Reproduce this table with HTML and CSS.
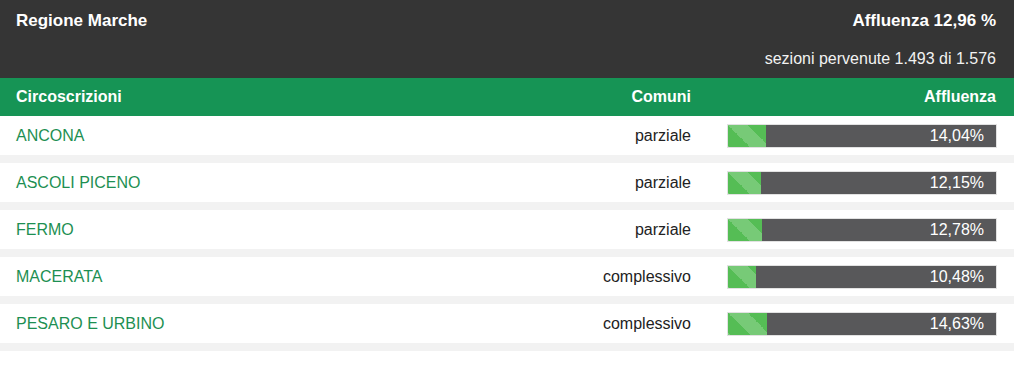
FILE: index.html
```html
<!DOCTYPE html>
<html lang="it">
<head>
<meta charset="utf-8">
<link rel="stylesheet" href="styles.css">
</head>
<body>
<div class="panel">
  <div class="top">
    <div class="top-row">
      <span class="region">Regione Marche</span>
      <span class="total">Affluenza 12,96 %</span>
    </div>
    <div class="sections">sezioni pervenute 1.493 di 1.576</div>
  </div>
  <div class="grid head">
    <span>Circoscrizioni</span>
    <span class="right">Comuni</span>
    <span class="right">Affluenza</span>
  </div>
  <div class="grid row">
    <span class="name">ANCONA</span>
    <span class="right">parziale</span>
    <div class="bar"><div class="fill" style="width:14.04%"></div><span class="pct">14,04%</span></div>
  </div>
  <div class="grid row">
    <span class="name">ASCOLI PICENO</span>
    <span class="right">parziale</span>
    <div class="bar"><div class="fill" style="width:12.15%"></div><span class="pct">12,15%</span></div>
  </div>
  <div class="grid row">
    <span class="name">FERMO</span>
    <span class="right">parziale</span>
    <div class="bar"><div class="fill" style="width:12.78%"></div><span class="pct">12,78%</span></div>
  </div>
  <div class="grid row">
    <span class="name">MACERATA</span>
    <span class="right">complessivo</span>
    <div class="bar"><div class="fill" style="width:10.48%"></div><span class="pct">10,48%</span></div>
  </div>
  <div class="grid row">
    <span class="name">PESARO E URBINO</span>
    <span class="right">complessivo</span>
    <div class="bar"><div class="fill" style="width:14.63%"></div><span class="pct">14,63%</span></div>
  </div>
</div>
</body>
</html>
```
FILE: styles.css
```css
html, body {
  margin: 0;
  padding: 0;
  background: #ffffff;
}
body {
  font-family: "Liberation Sans", Arial, sans-serif;
  color: #222222;
}
.panel {
  width: 1014px;
}
.top {
  background: #353535;
  color: #ffffff;
  height: 78px;
  box-sizing: border-box;
  padding: 10px 18px 0 16px;
}
.top-row {
  display: flex;
  justify-content: space-between;
  font-weight: bold;
  font-size: 17px;
  line-height: 21px;
}
.sections {
  text-align: right;
  font-size: 16px;
  line-height: 18px;
  margin-top: 19px;
  color: #f2f2f2;
}
.grid {
  display: grid;
  grid-template-columns: 1fr 200px 268px;
  column-gap: 37px;
  align-items: center;
  padding: 0 18px 0 16px;
}
.right {
  text-align: right;
}
.head {
  background: #169455;
  color: #ffffff;
  font-weight: bold;
  font-size: 16px;
  height: 38px;
}
.row {
  height: 39px;
  border-bottom: 8px solid #f2f2f2;
  font-size: 16px;
  color: #222222;
}
.row > span {
  padding-top: 1px;
}
.name {
  color: #1d8f52;
}
.bar {
  position: relative;
  height: 22px;
  background: #58585a;
  box-shadow: 0 0 0 1px #e2e2e2;
  display: flex;
  align-items: center;
  justify-content: flex-end;
  margin-top: 1px;
}
.fill {
  position: absolute;
  left: 0;
  top: 0;
  bottom: 0;
  background-color: #55bd55;
  background-image: linear-gradient(45deg, rgba(255,255,255,.2) 25%, transparent 25%, transparent 50%, rgba(255,255,255,.2) 50%, rgba(255,255,255,.2) 75%, transparent 75%, transparent);
  background-size: 40px 40px;
}
.pct {
  position: relative;
  color: #ffffff;
  font-size: 16px;
  padding-right: 12px;
}
```
